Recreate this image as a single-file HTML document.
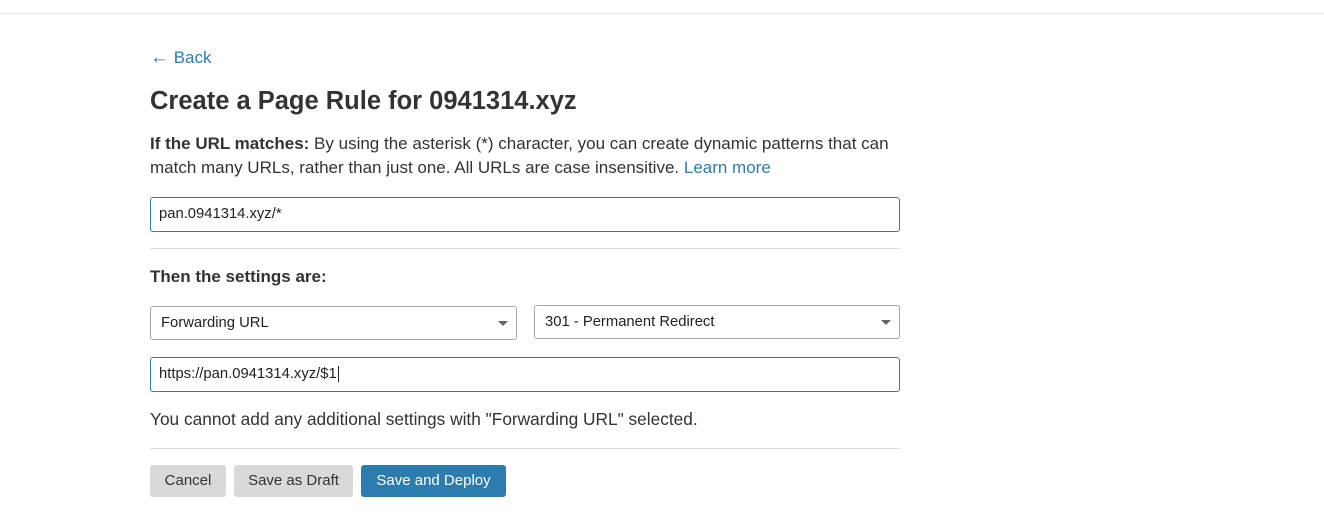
<!DOCTYPE html>
<html><head><meta charset="utf-8"><style>
*{box-sizing:border-box;margin:0;padding:0}
body{width:1324px;height:527px;background:#fff;font-family:"Liberation Sans",sans-serif;color:#333;position:relative;overflow:hidden}
.a{position:absolute;white-space:nowrap}
.topline{position:absolute;left:0;top:13px;width:1324px;height:1px;background:#e6e6e6}
.inp{position:absolute;border:1px solid #2c7cb0;border-radius:3px;height:35px;font-size:14.8px;padding-left:8px;line-height:33px;color:#222}
.sel{position:absolute;border:1px solid #a8a8a8;border-radius:3px;height:34px;font-size:14.8px;padding-left:10px;line-height:32px;color:#222}
.sel:after{content:"";position:absolute;right:8px;top:14px;border-left:5px solid transparent;border-right:5px solid transparent;border-top:5px solid #666}
.hr{position:absolute;left:150px;width:750px;height:1px;background:#ddd}
.btn{position:absolute;top:465px;height:32px;border-radius:3px;font-size:15px;line-height:32px;text-align:center;background:#d9d9d9;color:#333}
</style></head><body>
<div class="topline"></div>
<div class="a" style="left:150px;top:48px;font-size:17px;color:#2c7cb0"><span style="font-size:19px;line-height:17px">←</span> Back</div>
<div class="a" style="left:150px;top:87px;font-size:25.5px;font-weight:bold;color:#333">Create a Page Rule for 0941314.xyz</div>
<div class="a" style="left:150px;top:132px;font-size:17px;line-height:24px"><b>If the URL matches:</b> By using the asterisk (*) character, you can create dynamic patterns that can<br>match many URLs, rather than just one. All URLs are case insensitive. <span style="color:#2c7cb0">Learn more</span></div>
<div class="inp" style="left:150px;top:197px;width:750px">pan.0941314.xyz/*</div>
<div class="hr" style="top:248px"></div>
<div class="a" style="left:150px;top:267px;font-size:17px;font-weight:bold">Then the settings are:</div>
<div class="sel" style="left:150px;top:306px;width:367px">Forwarding URL</div>
<div class="sel" style="left:534px;top:305px;width:366px">301 - Permanent Redirect</div>
<div class="inp" style="left:150px;top:357px;width:750px">https://pan.0941314.xyz/$1<span style="border-left:1px solid #222;margin-left:1px"></span></div>
<div class="a" style="left:150px;top:409px;font-size:17.3px">You cannot add any additional settings with "Forwarding URL" selected.</div>
<div class="hr" style="top:448px"></div>
<div class="btn" style="left:150px;width:76px">Cancel</div>
<div class="btn" style="left:234px;width:119px">Save as Draft</div>
<div class="btn" style="left:361px;width:145px;background:#2c7cb0;color:#fff">Save and Deploy</div>
</body></html>
